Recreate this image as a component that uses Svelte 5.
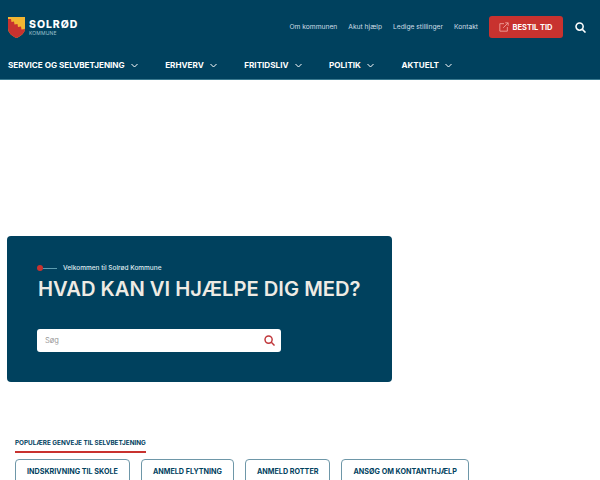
<script lang="ts">
  const topLinks = ["Om kommunen", "Akut hjælp", "Ledige stillinger", "Kontakt"]
  const navItems = ["SERVICE OG SELVBETJENING", "ERHVERV", "FRITIDSLIV", "POLITIK", "AKTUELT"]
  const shortcuts = ["INDSKRIVNING TIL SKOLE", "ANMELD FLYTNING", "ANMELD ROTTER", "ANSØG OM KONTANTHJÆLP"]
</script>

<header class="site-header">
  <div class="top-row">
    <a class="logo" href="#top">
      <svg class="shield" width="17" height="21" viewBox="0 0 17 21">
        <path d="M0 0H17V11C17 16 13 19 8.500 21C4 19 0 16 0 11Z" fill="#f2b632" />
        <path d="M0 2L3 2L3.500 5L6 4.500L6.500 7.500L9.500 7L10 10L13 9.500L13.500 12.500L17 12C17 16 13 19 8.500 21C4 19 0 16 0 11Z" fill="#c8322f" />
      </svg>
      <span class="logo-text">
        <span class="logo-name">SOLRØD</span>
        <span class="logo-sub">KOMMUNE</span>
      </span>
    </a>
    <nav class="top-links">
      {#each topLinks as link}
        <a href="#top">{link}</a>
      {/each}
    </nav>
    <button class="book-btn">
      <svg width="10" height="10" viewBox="0 0 12 12" fill="none" stroke="#f3a9a4" stroke-width="1">
        <path d="M6 2H1V11H10V6" /><path d="M5 7L11 1M7.500 1H11V4.500" />
      </svg>
      BESTIL TID
    </button>
    <svg class="search-icon" width="11" height="11" viewBox="0 0 12 12" fill="none" stroke="#fff" stroke-width="1.700">
      <circle cx="5" cy="5" r="3.900" /><line x1="8" y1="8" x2="11.500" y2="11.500" />
    </svg>
  </div>
  <nav class="main-nav">
    {#each navItems as item}
      <a href="#top">
        {item}
        <svg width="7" height="5" viewBox="0 0 7 5" fill="none" stroke="#fff" stroke-width="1">
          <path d="M0.500 1L3.500 4L6.500 1" />
        </svg>
      </a>
    {/each}
  </nav>
</header>

<main>
  <section class="hero">
    <div class="welcome">
      <span class="dot"></span><span class="line"></span>
      <span>Velkommen til Solrød Kommune</span>
    </div>
    <h1>HVAD KAN VI HJÆLPE DIG MED?</h1>
    <div class="search">
      <span class="placeholder">Søg</span>
      <svg width="11" height="11" viewBox="0 0 12 12" fill="none" stroke="#c0363a" stroke-width="1.600">
        <circle cx="5" cy="5" r="3.900" /><line x1="8" y1="8" x2="11.500" y2="11.500" />
      </svg>
    </div>
  </section>

  <section class="shortcuts">
    <h2>POPULÆRE GENVEJE TIL SELVBETJENING</h2>
    <div class="shortcut-list">
      {#each shortcuts as s}
        <a href="#top">{s}</a>
      {/each}
    </div>
  </section>
</main>

<style>
  :global(body) {
    margin: 0;
    background: #fff;
    height: 480px;
    overflow: hidden;
    font-family: "Inter", "Liberation Sans", sans-serif;
  }

  a {
    text-decoration: none;
    color: inherit;
  }

  .site-header {
    background: #00415e;
    height: 80px;
    box-sizing: border-box;
    border-bottom: 1px solid #3a7a90;
    color: #fff;
  }

  .top-row {
    display: flex;
    align-items: center;
    height: 54px;
    padding: 0 14px 0 8px;
  }

  .logo {
    display: flex;
    align-items: center;
    gap: 4px;
    margin-right: auto;
  }

  .logo-text {
    display: flex;
    flex-direction: column;
  }

  .logo-name {
    font-size: 10.500px;
    font-weight: 800;
    letter-spacing: 0.09em;
    line-height: 11px;
  }

  .logo-sub {
    font-size: 5px;
    line-height: 6px;
    color: #9fc3d0;
    letter-spacing: 0.03em;
  }

  .top-links {
    display: flex;
    gap: 11px;
    font-size: 6.700px;
    color: #cfdfe6;
    margin-right: 11px;
  }

  .book-btn {
    display: flex;
    align-items: center;
    gap: 3px;
    width: 74px;
    height: 22px;
    justify-content: center;
    border: none;
    border-radius: 3px;
    background: #c8322f;
    color: #fff;
    font-family: inherit;
    font-size: 7.500px;
    font-weight: 700;
    padding: 0;
    margin-right: 12px;
  }

  .main-nav {
    display: flex;
    align-items: center;
    height: 22px;
    gap: 27.500px;
    padding-left: 8px;
    font-size: 8.150px;
    font-weight: 700;
  }

  .main-nav a {
    display: flex;
    align-items: center;
    gap: 6px;
  }

  main {
    padding: 156px 7px 0;
  }

  .hero {
    box-sizing: border-box;
    width: 385px;
    height: 146px;
    background: #00415e;
    border-radius: 4px;
    padding: 26px 30px 0;
    color: #fff;
  }

  .welcome {
    display: flex;
    align-items: center;
    font-size: 6.500px;
    font-weight: 500;
    color: #dfeaee;
    height: 12px;
  }

  .dot {
    width: 6px;
    height: 6px;
    border-radius: 50%;
    background: #c8322f;
  }

  .line {
    width: 14px;
    height: 1px;
    background: #5c9db0;
    margin-right: 6px;
  }

  h1 {
    margin: 3px 0 0 1px;
    font-size: 20.200px;
    line-height: 24px;
    font-weight: 600;
    color: #eeebe4;
    white-space: nowrap;
  }

  .search {
    display: flex;
    align-items: center;
    justify-content: space-between;
    width: 244px;
    height: 23px;
    box-sizing: border-box;
    margin-top: 28px;
    padding: 0 6px 0 8px;
    background: #fff;
    border-radius: 3px;
  }

  .placeholder {
    font-size: 7.500px;
    color: #999;
  }

  .shortcuts {
    padding: 0 8px;
    margin-top: 57px;
  }

  h2 {
    display: block;
    width: fit-content;
    margin: 0;
    padding-bottom: 3px;
    border-bottom: 2px solid #c8322f;
    font-size: 6.350px;
    line-height: 9px;
    font-weight: 700;
    color: #00415e;
  }

  .shortcut-list {
    display: flex;
    gap: 11px;
    margin-top: 6px;
  }

  .shortcut-list a {
    box-sizing: border-box;
    height: 30px;
    padding: 6px 11px 0;
    border: 1px solid #6e97a8;
    border-radius: 4px;
    font-size: 7.200px;
    font-weight: 700;
    line-height: 11px;
    color: #00415e;
    white-space: nowrap;
  }
</style>
